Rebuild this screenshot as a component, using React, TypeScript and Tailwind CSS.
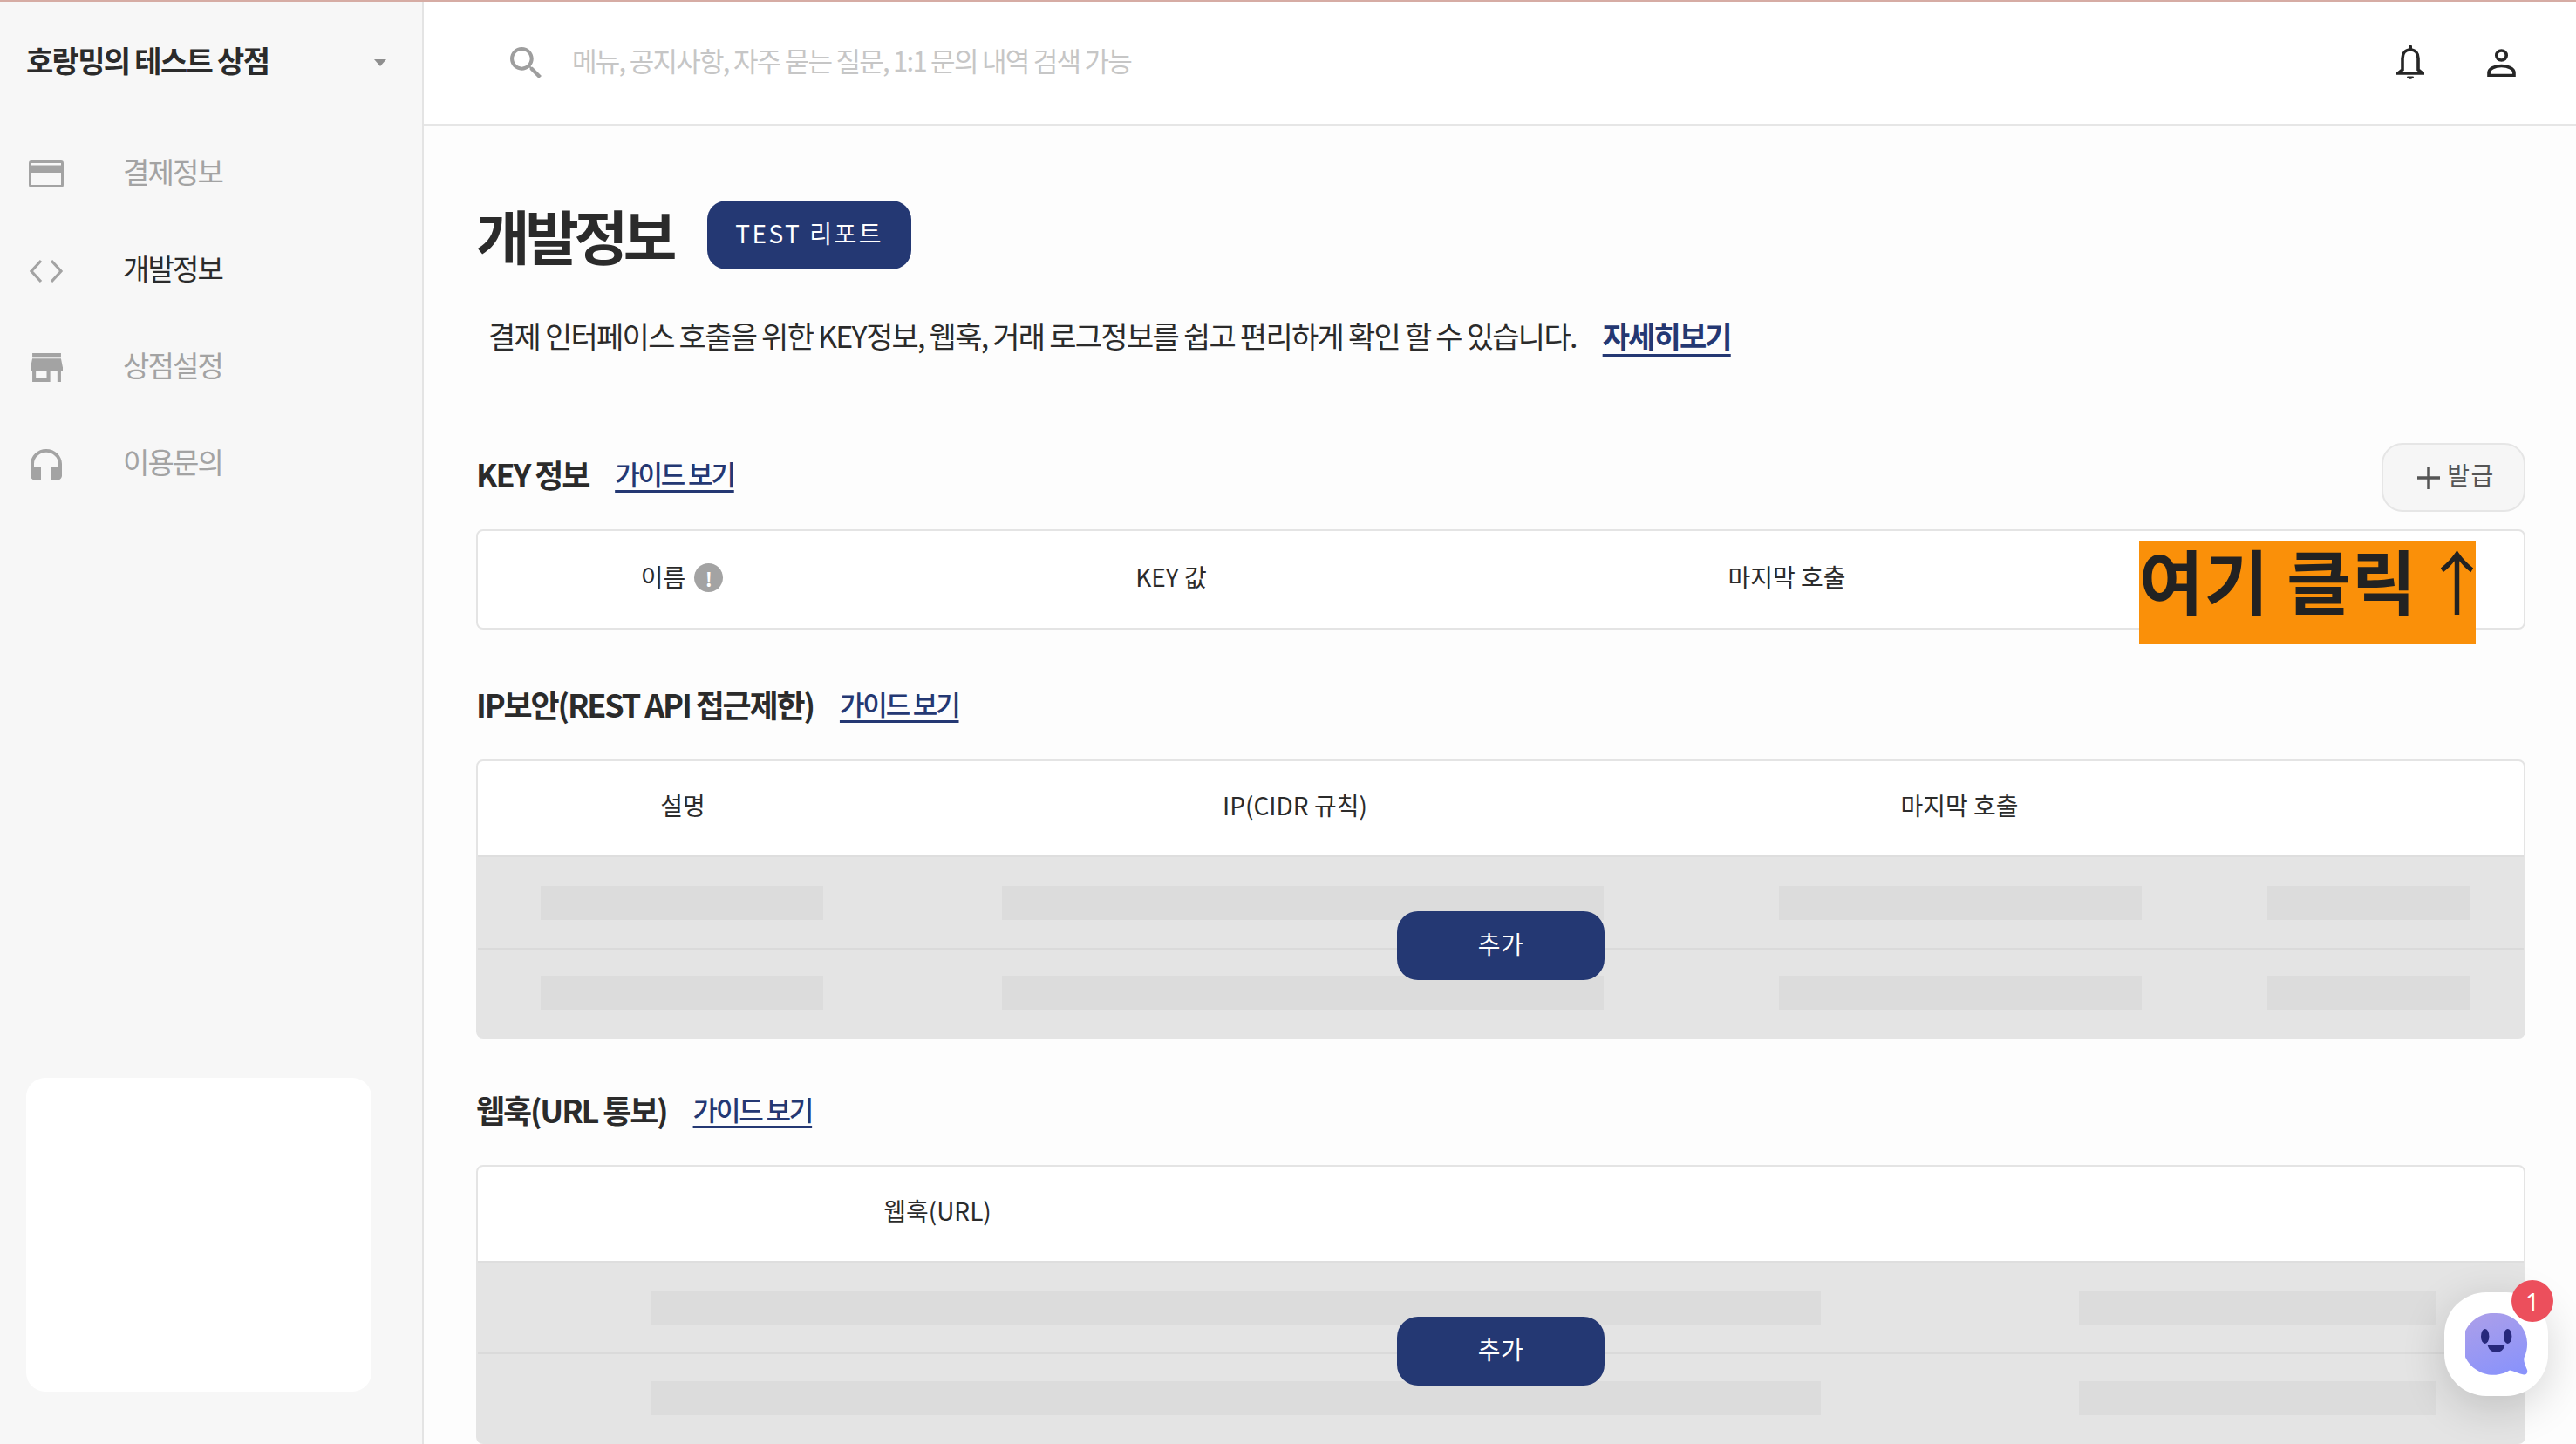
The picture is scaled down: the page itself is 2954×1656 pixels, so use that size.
const FONT = "font-['Noto_Sans_CJK_KR','Noto_Sans',sans-serif]";

function Skeleton({ className }: { className: string }) {
  return <div className={`h-[39px] bg-[#dcdcdc] ${className}`} />;
}

function AddButton() {
  return (
    <button className="absolute left-[1054px] top-[172px] flex h-[79px] w-[238px] items-center justify-center rounded-[24px] bg-[#243873] pb-[5px] text-[28px] tracking-[0.02em] text-white">
      추가
    </button>
  );
}

function Guide({ children }: { children: string }) {
  return (
    <a className="text-[31px] font-medium tracking-[-0.07em] text-[#243873] underline decoration-[3px] underline-offset-[6px]">
      {children}
    </a>
  );
}

function SectionTitle({ title }: { title: string }) {
  return (
    <div className="flex items-center gap-[30px]">
      <h2 className="text-[36px] font-bold leading-[50px] tracking-[-0.06em] text-[#2b2b2b]">{title}</h2>
      <Guide>가이드 보기</Guide>
    </div>
  );
}

const nav = [
  {
    label: "결제정보",
    active: false,
    icon: (
      <svg viewBox="0 0 40 31" className="h-[31px] w-[40px]">
        <path fillRule="evenodd" fill="#a3a3a3" d="M3 0h34a3 3 0 0 1 3 3v25a3 3 0 0 1-3 3H3a3 3 0 0 1-3-3V3a3 3 0 0 1 3-3zm0 3v2.500h34V3zm0 11v14h34V14z" />
      </svg>
    ),
  },
  {
    label: "개발정보",
    active: true,
    icon: (
      <svg viewBox="0 0 40 28" className="h-[28px] w-[40px]" fill="none" stroke="#a3a3a3" strokeWidth="3.200">
        <path d="M14 2 3 14l11 12M26 2l11 12-11 12" />
      </svg>
    ),
  },
  {
    label: "상점설정",
    active: false,
    icon: (
      <svg viewBox="3 4 18 16" className="h-[33px] w-[37px] fill-[#a3a3a3]" preserveAspectRatio="none">
        <path d="M20 4H4v2h16V4zm1 10v-2l-1-5H4l-1 5v2h1v6h10v-6h4v6h2v-6h1zm-9 4H6v-4h6v4z" />
      </svg>
    ),
  },
  {
    label: "이용문의",
    active: false,
    icon: (
      <svg viewBox="3 1 18 19" className="h-[36px] w-[36px] fill-[#a3a3a3]" preserveAspectRatio="none">
        <path d="M12 1c-4.970 0-9 4.030-9 9v7c0 1.660 1.340 3 3 3h3v-8H5v-2c0-3.870 3.130-7 7-7s7 3.130 7 7v2h-4v8h3c1.660 0 3-1.340 3-3v-7c0-4.970-4.030-9-9-9z" />
      </svg>
    ),
  },
];

function Sidebar() {
  return (
    <aside className="flex h-full w-[486px] shrink-0 flex-col border-r-2 border-[#e4e4e4] bg-[#f7f7f7] pl-[30px]">
      <div className="flex h-[136px] items-center justify-between pb-[3px] pr-[41px]">
        <span className="text-[34px] font-bold tracking-[-0.05em] text-[#2b2b2b]">호랑밍의 테스트 상점</span>
        <svg viewBox="0 0 14 8" className="mt-[6px] h-[8px] w-[14px] fill-[#8f8f8f]">
          <path d="M0 0h14L7 8z" />
        </svg>
      </div>
      <nav className="flex flex-col pt-[6px]">
        {nav.map((n) => (
          <div key={n.label} className="flex h-[111px] items-center">
            <div className="flex w-[78px] justify-start pl-[2px]">
              <span className="flex h-[40px] w-[42px] items-center justify-center">{n.icon}</span>
            </div>
            <span className={`ml-[33px] pb-[6px] text-[33px] tracking-[-0.057em] ${n.active ? "text-[#2b2b2b]" : "text-[#a3a3a3]"}`}>
              {n.label}
            </span>
          </div>
        ))}
      </nav>
      <div className="mt-auto mb-[60px] h-[360px] w-[396px] rounded-[22px] bg-white" />
    </aside>
  );
}

function Header() {
  return (
    <header className="flex h-[142px] shrink-0 items-center border-b-2 border-[#e6e6e6] bg-white pl-[99px] pr-[69px]">
      <svg viewBox="3 3 17.500 17.500" className="h-[36px] w-[36px] fill-[#9e9e9e]">
        <path d="M15.500 14h-.79l-.28-.27C15.410 12.590 16 11.110 16 9.500 16 5.910 13.090 3 9.500 3S3 5.910 3 9.500 5.910 16 9.500 16c1.610 0 3.090-.59 4.230-1.570l.27.28v.79l5 4.990L20.490 19l-4.990-5zm-6 0C7.010 14 5 11.990 5 9.500S7.010 5 9.500 5 14 7.010 14 9.500 11.990 14 9.500 14z" />
      </svg>
      <span className="ml-[35px] pb-[6px] text-[31px] tracking-[-0.056em] text-[#c6c6c6]">
        메뉴, 공지사항, 자주 묻는 질문, 1:1 문의 내역 검색 가능
      </span>
      <div className="ml-auto flex items-center gap-[72px]">
        <svg viewBox="0 0 32 40" className="h-[40px] w-[32px]" fill="none" stroke="#262626" strokeWidth="3.600">
          <path d="M16 5c-6 0-9 4.500-9 10v13l-5 4h28l-5-4V15c0-5.500-3-10-9-10z" />
          <path d="M16 1.500v3" strokeWidth="4" strokeLinecap="round" />
          <path d="M12.500 36c.5 3 6.500 3 7 0z" fill="#262626" strokeWidth="1" />
        </svg>
        <svg viewBox="0 0 32 32" className="h-[32px] w-[33px]" fill="none" stroke="#262626" strokeWidth="3.600" preserveAspectRatio="none">
          <circle cx="16" cy="7.500" r="5.500" />
          <path d="M2 30.500v-3c0-5 7-8 14-8s14 3 14 8v3z" />
        </svg>
      </div>
    </header>
  );
}

function Th({ children, className = "" }: { children: React.ReactNode; className?: string }) {
  return (
    <div className={`flex items-center justify-center pb-[8px] text-[28px] tracking-[0em] text-[#2b2b2b] ${className}`}>
      {children}
    </div>
  );
}

function IpRow({ border }: { border?: boolean }) {
  return (
    <div className={`grid grid-cols-[472px_940px_578px_358px] items-center ${border ? "h-[100px] border-t-2 border-[#dadada]" : "h-[104px]"}`}>
      <Skeleton className="ml-[72px] w-[324px]" />
      <Skeleton className="ml-[129px] w-[690px]" />
      <Skeleton className="ml-[80px] w-[416px]" />
      <Skeleton className="ml-[62px] w-[233px]" />
    </div>
  );
}

function HookRow({ border }: { border?: boolean }) {
  return (
    <div className={`flex h-[103px] items-center ${border ? "border-t-2 border-[#dadada]" : ""}`}>
      <Skeleton className="ml-[198px] w-[1342px]" />
      <Skeleton className="ml-[296px] w-[409px]" />
    </div>
  );
}

function Card({ children, className }: { children: React.ReactNode; className: string }) {
  return <div className={`rounded-[8px] border-2 border-[#e4e4e4] ${className}`}>{children}</div>;
}

function Content() {
  return (
    <div className="flex flex-1 flex-col bg-[#fdfdfd] pl-[60px] pr-[58px] pt-[86px]">
      <div className="flex h-[79px] items-center gap-[40px]">
        <h1 className="text-[67px] font-bold tracking-[-0.08em] text-[#2b2b2b]">개발정보</h1>
        <button className="flex h-[79px] w-[234px] items-center justify-center rounded-[22px] bg-[#243873] pb-[6px] text-[28px] tracking-[0.09em] text-white">
          TEST 리포트
        </button>
      </div>
      <div className="mt-[52px] flex h-[46px] items-center pl-[14px]">
        <p className="text-[34px] tracking-[-0.051em] text-[#2b2b2b]">
          결제 인터페이스 호출을 위한 KEY정보, 웹훅, 거래 로그정보를 쉽고 편리하게 확인 할 수 있습니다.
        </p>
        <a className="ml-[30px] text-[34px] font-bold tracking-[-0.055em] text-[#243873] underline decoration-[3px] underline-offset-[7px]">
          자세히보기
        </a>
      </div>

      <div className="mt-[101px] flex h-[79px] items-center justify-between">
        <div className="pb-[9px]">
          <SectionTitle title="KEY 정보" />
        </div>
        <button className="flex h-[79px] w-[165px] items-center justify-center gap-[8px] rounded-[24px] border-2 border-[#e6e6e6] bg-[#f6f6f6] pl-[6px] text-[28px] tracking-[0.05em] text-[#555555]">
          <svg viewBox="0 0 26 26" className="h-[26px] w-[26px]" stroke="#555555" strokeWidth="3.500">
            <path d="M13 0v26M0 13h26" />
          </svg>
          <span className="pb-[7px]">발급</span>
        </button>
      </div>
      <div className="relative mt-[20px]">
        <Card className="grid h-[115px] grid-cols-[468px_654px_758px_468px] items-center bg-white">
          <Th>
            이름
            <span className="ml-[10px] mt-[4px] flex h-[33px] w-[33px] items-center justify-center rounded-full bg-[#a3a3a3] text-[22px] font-bold leading-none text-white">!</span>
          </Th>
          <Th>KEY 값</Th>
          <Th>마지막 호출</Th>
          <div />
        </Card>
        <div className="absolute left-[1907px] top-[13px] flex h-[119px] w-[386px] items-start justify-start bg-[#fa9009] font-bold">
          <span className="mt-[-7px] whitespace-nowrap text-[80px] leading-[100px] tracking-[0.015em] text-[#222222]">
            여기 클릭<span className="ml-[6px] font-normal">↑</span>
          </span>
        </div>
      </div>

      <div className="mt-[60px] pb-[2px]">
        <SectionTitle title="IP보안(REST API 접근제한)" />
      </div>
      <Card className="relative mt-[37px] h-[320px] overflow-hidden bg-[#e4e4e4]">
        <div className="grid h-[110px] grid-cols-[470px_934px_590px_354px] items-center border-b-2 border-[#dedede] bg-white">
          <Th>설명</Th>
          <Th>IP(CIDR 규칙)</Th>
          <Th>마지막 호출</Th>
          <div />
        </div>
        <IpRow />
        <IpRow border />
        <AddButton />
      </Card>

      <div className="mt-[56px] pb-[2px]">
        <SectionTitle title="웹훅(URL 통보)" />
      </div>
      <Card className="relative mt-[37px] h-[320px] overflow-hidden bg-[#e4e4e4]">
        <div className="flex h-[110px] items-center border-b-2 border-[#dedede] bg-white">
          <div className="w-[1054px]">
            <Th>웹훅(URL)</Th>
          </div>
        </div>
        <HookRow />
        <HookRow border />
        <AddButton />
      </Card>
    </div>
  );
}

function ChatWidget() {
  return (
    <div className="absolute left-[2803px] top-[1482px] h-[119px] w-[119px] rounded-[48px] bg-white shadow-[0_12px_50px_rgba(0,0,0,0.16)]">
      <svg viewBox="0 0 72 72" className="absolute left-[24px] top-[24px] h-[72px] w-[72px]">
        <defs>
          <linearGradient id="chatBubble" x1="0.300" y1="0" x2="0.700" y2="1">
            <stop offset="0" stopColor="#aa9eea" />
            <stop offset="1" stopColor="#8a93fb" />
          </linearGradient>
        </defs>
        <path fill="url(#chatBubble)" d="M35.500 0a35.500 35.500 0 0 1 32 51c-1 4 1.500 9 3.500 14 1 3.500-1 6-4 5.500-5-1-11-4-16-5a35.500 35.500 0 1 1-15.500-65.500z" />
        <ellipse cx="22.700" cy="26.500" rx="4.700" ry="8.500" fill="#27287c" />
        <ellipse cx="48.700" cy="26.500" rx="4.700" ry="8.500" fill="#27287c" />
        <path d="M27 36h17c1 0 1.500 1 1 2a10 10 0 0 1-19 0c-.5-1 0-2 1-2z" fill="#27287c" />
      </svg>
      <div className="absolute left-[77px] top-[-14px] flex h-[48px] w-[48px] items-center justify-center rounded-full bg-[#ec4f5c] font-['Noto_Sans'] text-[28px] text-white">
        1
      </div>
    </div>
  );
}

export default function App() {
  return (
    <div className={`relative flex h-[1656px] w-[2954px] flex-col overflow-hidden ${FONT}`}>
      <div className="h-[2px] shrink-0 bg-[#d6aca4]" />
      <div className="flex min-h-0 flex-1">
        <Sidebar />
        <main className="flex min-w-0 flex-1 flex-col">
          <Header />
          <Content />
        </main>
      </div>
      <ChatWidget />
    </div>
  );
}
